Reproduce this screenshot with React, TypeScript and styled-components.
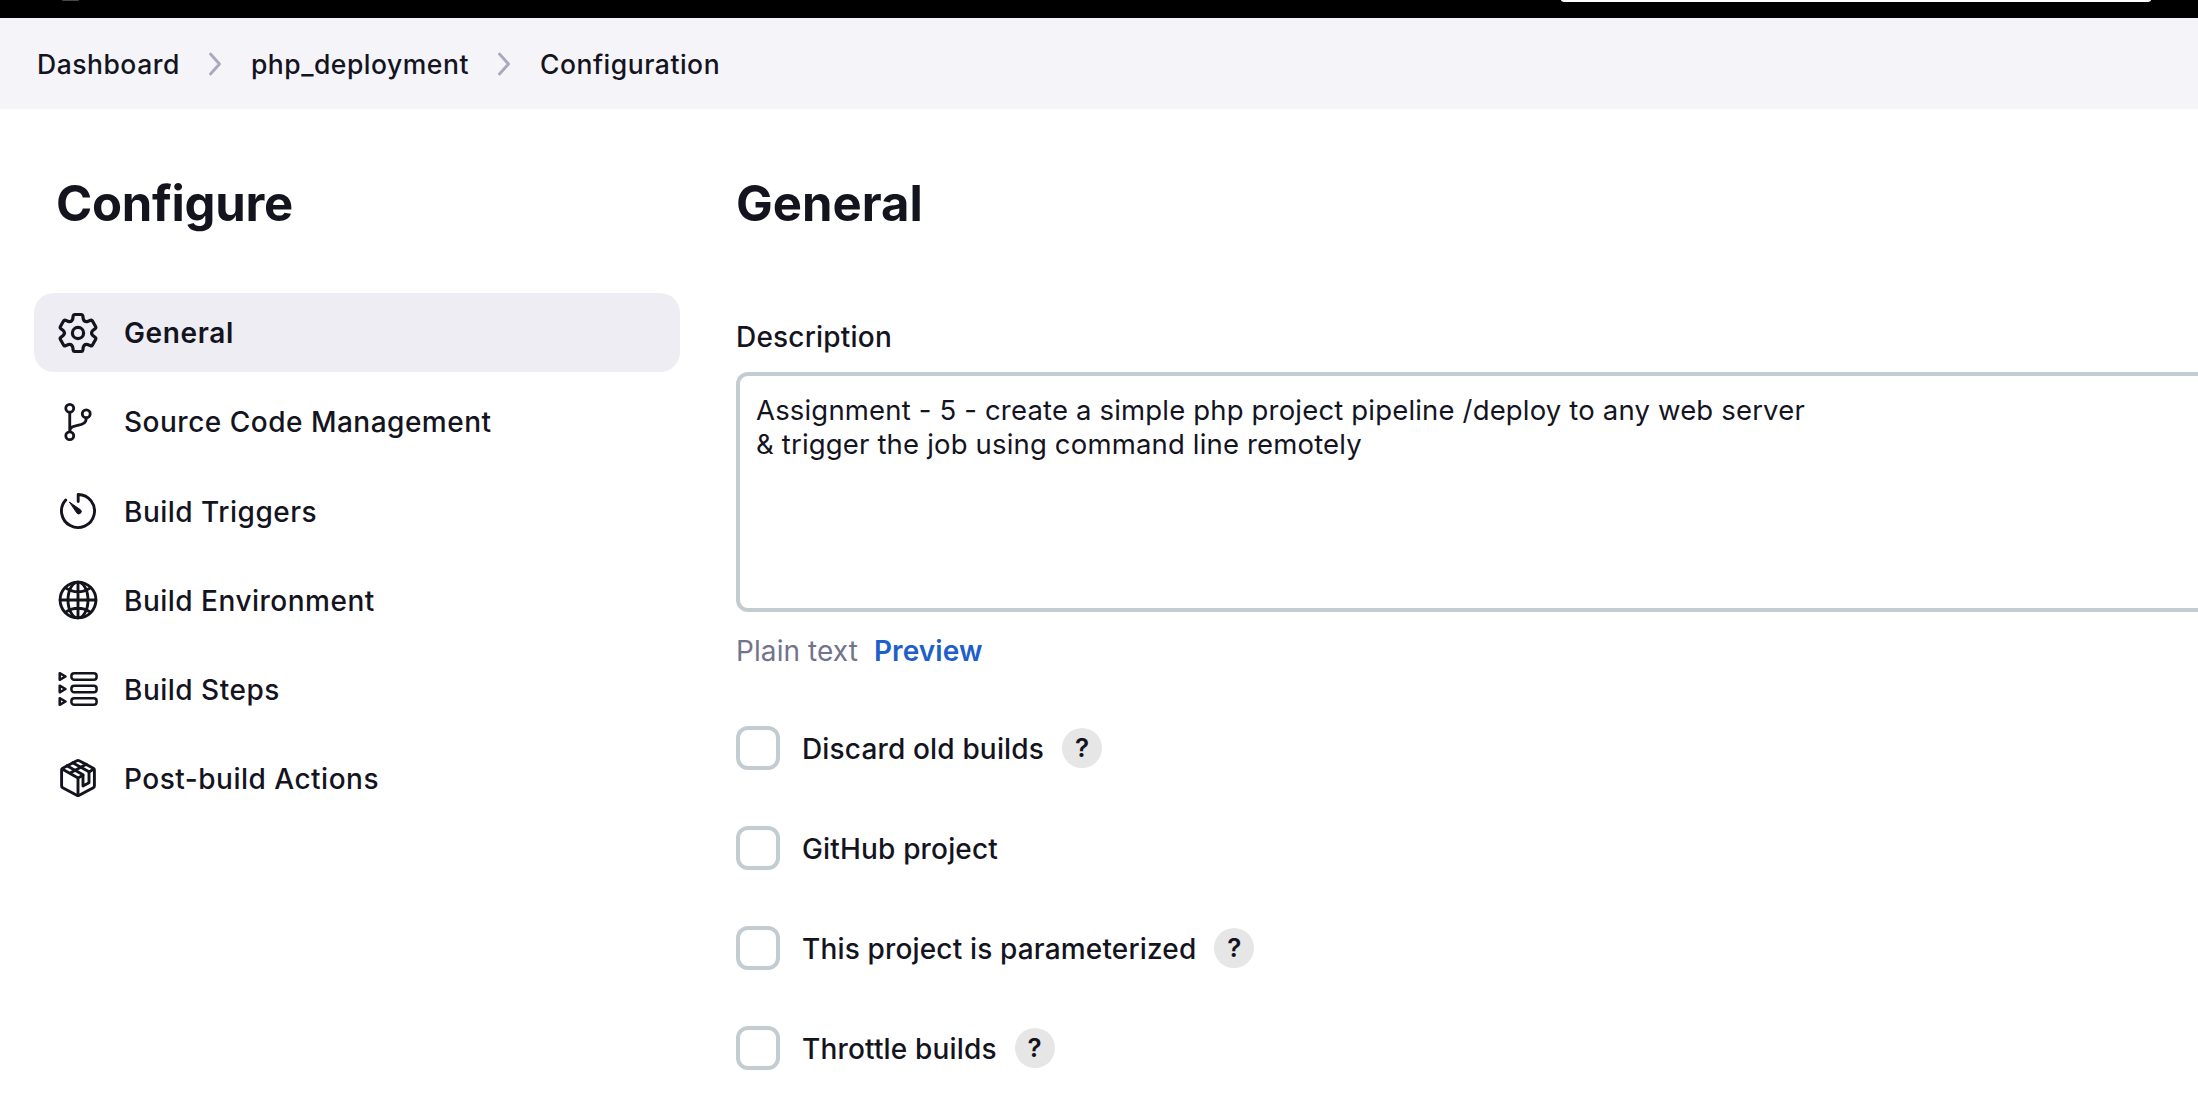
import React from 'react';
import styled, { createGlobalStyle } from 'styled-components';

const ink = '#14141f';
const line = '#c3ccd1';

const GlobalStyle = createGlobalStyle`
  *, *::before, *::after { box-sizing: border-box; }
  body {
    margin: 0;
    background: #fff;
    color: ${ink};
    font-family: Inter, 'Liberation Sans', sans-serif;
  }
`;

const Page = styled.div`
  height: 1116px;
  overflow: hidden;
`;

const TopBar = styled.header`
  display: flex;
  justify-content: space-between;
  align-items: flex-start;
  height: 18px;
  padding: 0 47px 0 62px;
  background: #000;
`;

const LogoEdge = styled.div`
  width: 17px;
  height: 1px;
  border-radius: 0 0 8px 8px;
  background: #4a4648;
`;

const SearchEdge = styled.div`
  width: 590px;
  height: 2px;
  border-radius: 0 0 5px 5px / 0 0 2px 2px;
  background: #fff;
`;

const Breadcrumbs = styled.nav`
  display: flex;
  align-items: center;
  height: 91px;
  padding: 0 37px;
  background: #f5f5f9;
`;

const Crumb = styled.a`
  padding-top: 1px;
  font-size: 26.5px;
  font-weight: 500;
  line-height: 34px;
  letter-spacing: 0.52px;
  white-space: nowrap;
`;

const ChevronIcon = styled.svg`
  flex: none;
  width: 16px;
  height: 26px;
  margin: 0 28px 0 27px;
  fill: none;
  stroke: #a9a9bd;
  stroke-width: 2.9;
  stroke-linecap: round;
  stroke-linejoin: round;
`;

const Body = styled.div`
  display: flex;
  gap: 56px;
  padding: 65px 0 0 34px;
`;

const Sidebar = styled.aside`
  flex: none;
  width: 646px;
`;

const Heading = styled.h1<{ $indent?: number; $spacing?: number }>`
  margin: 0;
  padding-left: ${p => p.$indent ?? 0}px;
  font-size: 49px;
  font-weight: 700;
  line-height: 60px;
  letter-spacing: ${p => p.$spacing ?? 0}px;
`;

const Tasks = styled.nav`
  display: flex;
  flex-direction: column;
  gap: 10.2px;
  margin-top: 59px;
`;

const Task = styled.a<{ $active?: boolean }>`
  display: flex;
  align-items: center;
  gap: 23px;
  height: 79px;
  padding-left: 22px;
  border-radius: 20px;
  background: ${p => (p.$active ? '#ededf3' : 'transparent')};
  font-size: 28px;
  font-weight: ${p => (p.$active ? 600 : 500)};
  letter-spacing: ${p => (p.$active ? 0.65 : 0.5)}px;
  line-height: 34px;
`;

const TaskLabel = styled.span`
  padding: 1.6px 0 0 1px;
`;

const TaskIcon = styled.svg<{ $stroke?: number }>`
  flex: none;
  width: 44px;
  height: 44px;
  fill: none;
  stroke: ${ink};
  stroke-width: ${p => p.$stroke ?? 2.9};
  stroke-linecap: round;
  stroke-linejoin: round;
`;

const Main = styled.main`
  flex: none;
  width: 1520px;
`;

const FieldLabel = styled.label`
  display: block;
  margin-top: 86px;
  font-size: 28px;
  font-weight: 500;
  line-height: 34px;
  letter-spacing: 0.2px;
`;

const DescriptionBox = styled.textarea`
  display: block;
  width: 100%;
  height: 240px;
  margin: 18px 0 0;
  padding: 17px 16px;
  border: 4px solid ${line};
  border-radius: 12px;
  outline: none;
  resize: none;
  background: #fff;
  color: ${ink};
  font: 400 27.5px/34px Inter, 'Liberation Sans', sans-serif;
  letter-spacing: 0.17px;
`;

const FormatRow = styled.div`
  display: flex;
  gap: 16px;
  margin-top: 22px;
  font-size: 28px;
  line-height: 34px;
  letter-spacing: 0.08px;
  color: #73738c;
`;

const PreviewLink = styled.a`
  font-weight: 600;
  color: #1f5fcc;
`;

const Options = styled.div`
  display: flex;
  flex-direction: column;
  gap: 56px;
  margin-top: 58px;
`;

const Option = styled.div`
  display: flex;
  align-items: center;
  height: 44px;
`;

const Checkbox = styled.span`
  flex: none;
  width: 44px;
  height: 44px;
  border: 4px solid ${line};
  border-radius: 12px;
  background: #fff;
`;

const OptionLabel = styled.span`
  margin-left: 22px;
  padding-top: 2px;
  font-size: 28px;
  font-weight: 500;
  line-height: 34px;
  letter-spacing: 0.16px;
  white-space: nowrap;
`;

const Help = styled.button`
  display: flex;
  align-items: center;
  justify-content: center;
  width: 40px;
  height: 40px;
  margin-left: 18px;
  padding: 0;
  border: 0;
  border-radius: 50%;
  background: #e6e6e7;
  color: ${ink};
  font: 600 26px/40px Inter, 'Liberation Sans', sans-serif;
`;

const Chevron = () => (
  <ChevronIcon viewBox="0 0 16 26">
    <path d="M3.5 3 12.5 13 3.5 23" />
  </ChevronIcon>
);

const GearIcon = () => (
  <TaskIcon viewBox="-22 -22 44 44" $stroke={3.2}>
    {[0, 60, 120, 180, 240, 300].map(angle => (
      <path
        key={angle}
        transform={`rotate(${angle})`}
        d="M-6.8-11.8Q-5.5-12.5-5.3-14L-4.8-17.3Q-4.6-18.5-3.4-18.5H3.4Q4.6-18.5 4.8-17.3L5.3-14Q5.5-12.5 6.8-11.8"
      />
    ))}
    <circle r="5.6" />
  </TaskIcon>
);

const BranchIcon = () => (
  <TaskIcon viewBox="0 0 512 512" $stroke={33}>
    <circle cx="160" cy="96" r="46" />
    <circle cx="160" cy="416" r="46" />
    <circle cx="352" cy="160" r="46" />
    <path d="M160 368V144M352 208c0 128-192 48-192 160" />
  </TaskIcon>
);

const TimerNeedle = styled.path`
  fill: ${ink};
  stroke-width: 1;
`;

const TimerIcon = () => (
  <TaskIcon viewBox="-22 -22 44 44">
    <path d="M-12.3-11A16.5 16.5 0 1 0 .2-16.5V-9.5" />
    <TimerNeedle d="M-8.3-8.7 2.5-1.2A2.1 2.1 0 1 1-.9 2.2Z" />
  </TaskIcon>
);

const GlobeIcon = () => (
  <TaskIcon viewBox="-22 -22 44 44">
    <circle r="17.9" />
    <ellipse rx="10" ry="17.9" />
    <path d="M0-17.9V17.9M-17.9 0H17.9M-11.9-11.9C-8.6-9.6-4.5-8.2 0-8.2S8.6-9.6 11.9-11.9M-11.9 11.9C-8.6 9.6-4.5 8.2 0 8.2S8.6 9.6 11.9 11.9" />
  </TaskIcon>
);

const StepsIcon = () => (
  <TaskIcon viewBox="-22 -22 44 44" $stroke={2.5}>
    {[-12.5, 0, 12.5].map(y => (
      <g key={y} transform={`translate(0 ${y})`}>
        <path d="M-18.3-3.3V3.3L-12.5 0Z" />
        <rect x="-6.6" y="-3.2" width="25.2" height="6.4" rx="2.8" />
      </g>
    ))}
  </TaskIcon>
);

const PackageIcon = () => (
  <TaskIcon viewBox="-22 -22 44 44">
    <path d="M-1.2-17.3Q0-18 1.2-17.3L15.3-9.8Q16.4-9.2 16.4-8V8Q16.4 9.2 15.3 9.8L1.2 17.3Q0 18-1.2 17.3L-15.3 9.8Q-16.4 9.2-16.4 8V-8Q-16.4-9.2-15.3-9.8Z" />
    <path d="M-15.8-9 0 0V17.6M0 0 5-2.8M11-6.1 15.8-9M-8.3-4.7 8.3-13.8" />
    <path d="M-11-12.2 5-3.2V8L11 4.8V-6.2L-5.3-15.2" />
  </TaskIcon>
);

const tasks: { label: string; Icon: React.FC }[] = [
  { label: 'General', Icon: GearIcon },
  { label: 'Source Code Management', Icon: BranchIcon },
  { label: 'Build Triggers', Icon: TimerIcon },
  { label: 'Build Environment', Icon: GlobeIcon },
  { label: 'Build Steps', Icon: StepsIcon },
  { label: 'Post-build Actions', Icon: PackageIcon },
];

const options = [
  { label: 'Discard old builds', help: true },
  { label: 'GitHub project', help: false },
  { label: 'This project is parameterized', help: true },
  { label: 'Throttle builds', help: true },
];

const description = `Assignment - 5 - create a simple php project pipeline /deploy to any web server
& trigger the job using command line remotely`;

export default function App() {
  return (
    <Page>
      <GlobalStyle />
      <TopBar>
        <LogoEdge />
        <SearchEdge />
      </TopBar>
      <Breadcrumbs>
        <Crumb>Dashboard</Crumb>
        <Chevron />
        <Crumb>php_deployment</Crumb>
        <Chevron />
        <Crumb>Configuration</Crumb>
      </Breadcrumbs>
      <Body>
        <Sidebar>
          <Heading $indent={22} $spacing={-0.28}>Configure</Heading>
          <Tasks>
            {tasks.map(({ label, Icon }, i) => (
              <Task key={label} $active={i === 0}>
                <Icon />
                <TaskLabel>{label}</TaskLabel>
              </Task>
            ))}
          </Tasks>
        </Sidebar>
        <Main>
          <Heading>General</Heading>
          <FieldLabel htmlFor="description">Description</FieldLabel>
          <DescriptionBox id="description" spellCheck={false} defaultValue={description} />
          <FormatRow>
            <span>Plain text</span>
            <PreviewLink>Preview</PreviewLink>
          </FormatRow>
          <Options>
            {options.map(({ label, help }) => (
              <Option key={label}>
                <Checkbox />
                <OptionLabel>{label}</OptionLabel>
                {help && <Help>?</Help>}
              </Option>
            ))}
          </Options>
        </Main>
      </Body>
    </Page>
  );
}
